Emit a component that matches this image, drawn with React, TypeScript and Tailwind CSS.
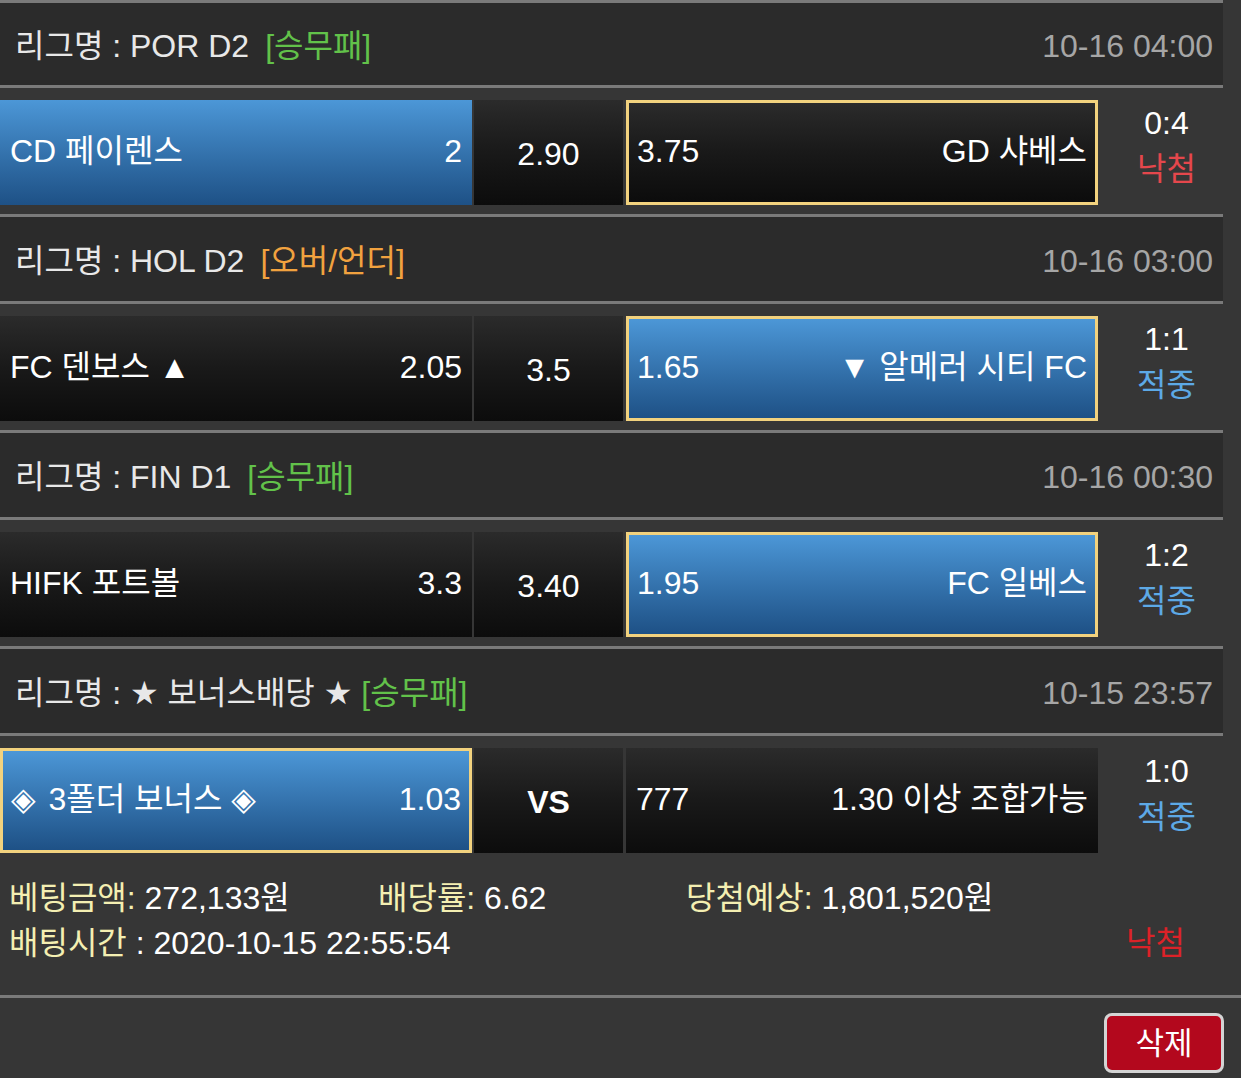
import React from "react";

type Cell = {
  name: React.ReactNode;
  odds: string;
  selected?: boolean;
  border?: boolean;
};

type Section = {
  league: React.ReactNode;
  tag: string;
  tagColor: string;
  tagGap: string;
  date: string;
  home: Cell;
  mid: string;
  midBold?: boolean;
  away: Cell;
  score: string;
  result: string;
  resultColor: string;
};

const Sym = ({ c }: { c: string }) => (
  <span style={{ fontFamily: '"DejaVu Sans", sans-serif' }}>{c}</span>
);

const sections: Section[] = [
  {
    league: "리그명 : POR D2",
    tag: "[승무패]",
    tagColor: "text-[#62c24a]",
    tagGap: "ml-[16px]",
    date: "10-16 04:00",
    home: { name: "CD 페이렌스", odds: "2", selected: true },
    mid: "2.90",
    away: { name: "GD 샤베스", odds: "3.75", border: true },
    score: "0:4",
    result: "낙첨",
    resultColor: "text-[#e5474c]",
  },
  {
    league: "리그명 : HOL D2",
    tag: "[오버/언더]",
    tagColor: "text-[#f1a23f]",
    tagGap: "ml-[16px]",
    date: "10-16 03:00",
    home: { name: "FC 덴보스 ▲", odds: "2.05" },
    mid: "3.5",
    away: { name: "▼ 알메러 시티 FC", odds: "1.65", selected: true, border: true },
    score: "1:1",
    result: "적중",
    resultColor: "text-[#5da9e6]",
  },
  {
    league: "리그명 : FIN D1",
    tag: "[승무패]",
    tagColor: "text-[#62c24a]",
    tagGap: "ml-[16px]",
    date: "10-16 00:30",
    home: { name: "HIFK 포트볼", odds: "3.3" },
    mid: "3.40",
    away: { name: "FC 일베스", odds: "1.95", selected: true, border: true },
    score: "1:2",
    result: "적중",
    resultColor: "text-[#5da9e6]",
  },
  {
    league: (
      <>
        리그명 : <Sym c="★" /> 보너스배당 <Sym c="★" />
      </>
    ),
    tag: "[승무패]",
    tagColor: "text-[#62c24a]",
    tagGap: "ml-[9px]",
    date: "10-15 23:57",
    home: {
      name: (
        <>
          <Sym c="◈" />
          <span className="ml-[4px]"> 3폴더 보너스 </span>
          <Sym c="◈" />
        </>
      ),
      odds: "1.03",
      selected: true,
      border: true,
    },
    mid: "VS",
    midBold: true,
    away: { name: "1.30 이상 조합가능", odds: "777" },
    score: "1:0",
    result: "적중",
    resultColor: "text-[#5da9e6]",
  },
];

function cellBg(c: Cell) {
  const base = c.selected
    ? "bg-linear-to-b from-[#4c97d7] to-[#1e5186]"
    : "bg-linear-to-b from-[#2b2b2b] via-[#191919] to-[#0c0c0c]";
  const border = c.border ? " border-[3px] border-[#f2d27e] px-[8px]" : " px-[10px]";
  return base + border;
}

export default function App() {
  return (
    <div
      className="w-[1241px] min-h-[1078px] bg-[#363636] text-white text-[32px] leading-none"
      style={{ fontFamily: '"Liberation Sans", Arial, "Noto Sans CJK KR", "DejaVu Sans", sans-serif' }}
    >
      {sections.map((s, i) => (
        <div key={i} className="w-[1223px]">
          <div className="h-[3px] bg-[#7a7a7a]" />
          <div
            className={
              (i === 0 ? "h-[82px] " : "h-[84px] ") +
              "bg-[#2b2b2b] flex items-center justify-between pl-[15px] pr-[10px] pt-[4px]"
            }
          >
            <div className="flex items-center text-[#e8e8e8]">
              <span>{s.league}</span>
              <span className={s.tagGap + " " + s.tagColor}>{s.tag}</span>
            </div>
            <span className="text-[#a6a6a6]">{s.date}</span>
          </div>
          <div className="h-[3px] bg-[#7a7a7a]" />
          <div className="flex pt-[12px] pb-[9px]">
            <div className={"w-[472px] h-[105px] flex items-center justify-between pb-[3px] " + cellBg(s.home)}>
              <span>{s.home.name}</span>
              <span>{s.home.odds}</span>
            </div>
            <div className="ml-[2px] w-[149px] h-[105px] flex items-center justify-center pt-[2px] bg-linear-to-b from-[#2b2b2b] via-[#191919] to-[#0c0c0c]">
              <span className={s.midBold ? "font-bold" : ""}>{s.mid}</span>
            </div>
            <div className={"ml-[3px] w-[472px] h-[105px] flex items-center justify-between pb-[3px] " + cellBg(s.away)}>
              <span>{s.away.odds}</span>
              <span>{s.away.name}</span>
            </div>
            <div className="flex-1 flex flex-col items-center pl-[12px] leading-[46px]">
              <span>{s.score}</span>
              <span className={s.resultColor}>{s.result}</span>
            </div>
          </div>
        </div>
      ))}
      <div className="pt-[14px] pl-[9px] h-[133px] leading-[45px]">
        <div className="flex">
          <div className="w-[369px]">
            <span className="text-[#f4efb2]">베팅금액:</span> 272,133원
          </div>
          <div className="w-[308px]">
            <span className="text-[#f4efb2]">배당률:</span> 6.62
          </div>
          <div>
            <span className="text-[#f4efb2]">당첨예상:</span> 1,801,520원
          </div>
        </div>
        <div className="flex justify-between pr-[56px]">
          <div>
            <span className="text-[#f4efb2]">배팅시간</span> : 2020-10-15 22:55:54
          </div>
          <span className="text-[#dc2228]">낙첨</span>
        </div>
      </div>
      <div className="h-[3px] bg-[#7a7a7a]" />
      <div className="flex justify-end pt-[15px] pr-[17px]">
        <button className="w-[120px] h-[60px] rounded-[8px] border-[3px] border-[#d4d4d4] bg-[#b3081d] text-white text-[31px] flex items-center justify-center">
          삭제
        </button>
      </div>
    </div>
  );
}
